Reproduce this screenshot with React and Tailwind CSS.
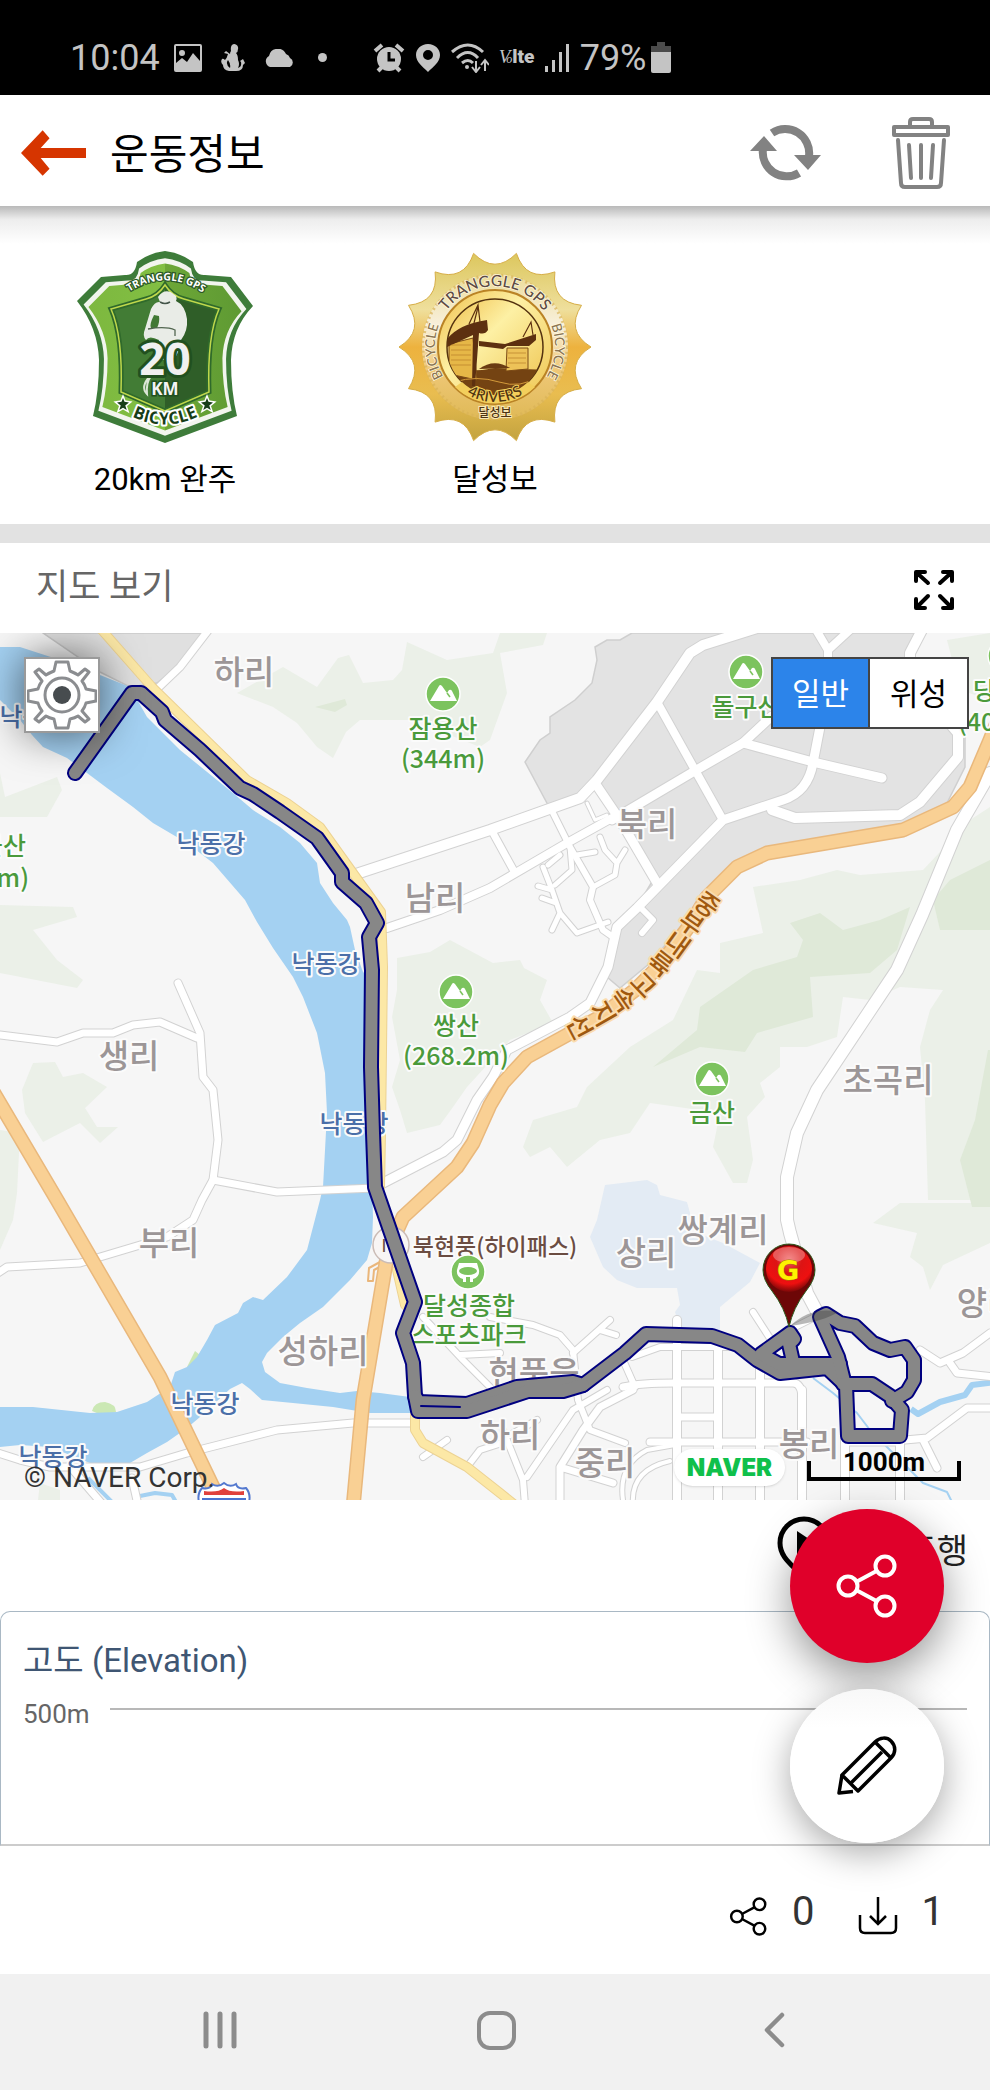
import React from "react";

const KR = "'Noto Sans CJK KR', sans-serif";

/* ---------- status bar ---------- */

function StatusBar() {
  return (
    <div className="flex h-[95px] items-center gap-[14px] bg-black pt-5 pl-[70px] text-[#c4c4c4]">
      <span className="text-[36px] leading-10">10:04</span>
      <div className="flex items-center gap-[19px]">
        <svg width="28" height="28" viewBox="0 0 28 28" fill="currentColor" aria-hidden="true">
          <path fillRule="evenodd" d="M2 0h24a2 2 0 0 1 2 2v24a2 2 0 0 1-2 2H2a2 2 0 0 1-2-2V2a2 2 0 0 1 2-2zm0 2v17l6-5 5 4 6-9 7 8V2zM8 6a3 3 0 1 1 0 6 3 3 0 0 1 0-6z" />
        </svg>
        <svg width="24" height="28" viewBox="0 0 24 28" fill="currentColor" aria-hidden="true">
          <path d="M13 0a4 4 0 0 1 4 5q0 3-2 4 2 2 2 7 2 4 0 8 4-1 3-6l-1-1 3-2 2 4-2 2q0 6-7 6H8q-6-1-6-6-3-3-1-6 1-1 3 1 2-2 3-6L3 9l2-2 4 3q0-2 1-3-1-6 3-7zM7 16q-3 4 2 8 1-4-2-8z" />
        </svg>
        <svg width="31" height="18" viewBox="0 0 31 18" fill="currentColor" aria-hidden="true">
          <path d="M6 18a6 6 0 0 1-1-11A9 9 0 0 1 22 5a6 6 0 0 1 4 4 5 5 0 0 1 0 9z" />
        </svg>
        <span className="ml-1 size-[9px] rounded-full bg-[#c4c4c4]" />
      </div>
      <div className="ml-8 flex items-center gap-[10px]">
        <svg width="32" height="30" viewBox="0 0 32 30" fill="none" stroke="currentColor" aria-hidden="true">
          <circle cx="16" cy="16" r="12" fill="currentColor" stroke="none" />
          <path d="M2 8l7-6M30 8l-7-6M5 28l4-4M27 28l-4-4" strokeWidth="4" />
          <path d="M16 9v8h6" stroke="#000" strokeWidth="3" />
        </svg>
        <svg width="26" height="28" viewBox="0 0 26 28" fill="currentColor" aria-hidden="true">
          <path fillRule="evenodd" d="M13 0c7 0 12 5 12 11 0 7-7 12-12 17C8 23 1 18 1 11 1 5 6 0 13 0zm0 6a5 5 0 1 0 0 10 5 5 0 0 0 0-10z" />
        </svg>
        <svg width="38" height="30" viewBox="0 0 38 30" fill="none" stroke="currentColor" strokeWidth="3" aria-hidden="true">
          <path d="M1 9Q17-5 32 9M6 15Q17 4 27 15M11 20q6-5 11 0" />
          <circle cx="16" cy="24" r="2" fill="currentColor" stroke="none" />
          <path d="M25 18v10M21 24l4 5 4-5M34 28V18M30 22l4-5 4 5" strokeWidth="2" />
        </svg>
        <span className="flex w-[36px] items-baseline text-[19px] leading-5 font-black">
          <i className="font-[Liberation_Serif] text-[19px] font-normal">V</i>
          <i className="-ml-1 font-[Liberation_Serif] text-[12px] font-normal">o</i>
          lte
        </span>
        <svg width="25" height="28" viewBox="0 0 25 28" fill="currentColor" aria-hidden="true">
          <path d="M0 22h3v6H0zM7 16h3v12H7zM14 8h3v20h-3zM21 0h3v28h-3z" />
        </svg>
        <div className="flex items-center gap-1">
          <span className="text-[36px] leading-10">79%</span>
          <svg width="20" height="31" viewBox="0 0 20 31" aria-hidden="true">
            <path d="M6 0h8v4h6v7H0V4h6z" fill="#4b4b4b" />
            <path d="M0 10h20v19a2 2 0 0 1-2 2H2a2 2 0 0 1-2-2z" fill="#c4c4c4" />
          </svg>
        </div>
      </div>
    </div>
  );
}

/* ---------- header ---------- */

function Header() {
  return (
    <header>
      <div className="flex h-[111px] items-center bg-white pt-1 pr-10 pl-[21px]">
        <button type="button" aria-label="뒤로">
          <svg width="65" height="46" viewBox="0 0 66 46" fill="#d63500" aria-hidden="true">
            <path d="M0 23L22 0l7 8-9 10h46v10H20l9 11-7 7z" />
          </svg>
        </button>
        <h1 className="ml-6 flex-1 pt-1 text-[42px] leading-[60px] text-black">운동정보</h1>
        <button type="button" aria-label="새로고침">
          <svg width="72" height="56" viewBox="0 0 72 56" fill="none" stroke="#828282" strokeWidth="8" aria-hidden="true">
            <path d="M22 8A24 24 0 0 1 59 31" />
            <path d="M49 48A24 24 0 0 1 13 24" />
            <path d="M44 30h27L58 45zM0 26h27L14 11z" fill="#828282" stroke="none" />
          </svg>
        </button>
        <button type="button" aria-label="삭제" className="ml-[70px]">
          <svg width="58" height="72" viewBox="0 0 58 72" fill="none" stroke="#828282" strokeWidth="4" strokeLinecap="round" strokeLinejoin="round" aria-hidden="true">
            <path d="M18 9V5q0-3 3-3h16q3 0 3 3v4" />
            <path d="M2 10h54v8H2zM6 23l3 43q0 4 4 4h32q4 0 4-4l3-43M17 28l2 33M29 28v33M41 28l-2 33" />
          </svg>
        </button>
      </div>
      <div className="h-[38px] bg-linear-to-b from-[#b9b9b9] via-[#ededed] via-35% to-white" />
    </header>
  );
}

/* ---------- badges ---------- */

const SHIELD =
  "M165 251Q181 253 193 262Q195 276 205 275L231 277L253 306Q232 328 231 360Q231 392 237 416L165 443L93 416Q99 392 99 360Q98 328 77 301L101 277L125 275Q135 276 137 262Q149 253 165 251Z";
const INNER = "M165 285Q172 296 184 299L219 309Q207 336 209 392L165 411L121 392Q123 336 111 309L146 299Q158 296 165 285Z";
const STAR = "M0-8L2-3L8-2L3 2L5 8L0 5L-5 8L-3 2L-8-2L-2-3Z";

function ShieldBadge() {
  return (
    <svg width="180" height="192" viewBox="75 251 180 192" role="img" aria-label="20km 자전거 완주 배지">
      <defs>
        <linearGradient id="leaf" x1="0" x2="1">
          <stop offset="0" stopColor="#7db83f" />
          <stop offset=".5" stopColor="#82bf43" />
          <stop offset=".5" stopColor="#6da737" />
          <stop offset="1" stopColor="#5e9a33" />
        </linearGradient>
        <linearGradient id="core" x1="0" x2="1">
          <stop offset=".5" stopColor="#427c35" />
          <stop offset=".5" stopColor="#2f5e28" />
        </linearGradient>
        <path id="shieldTop" d="M126 294Q166 266 206 295" />
        <path id="shieldBottom" d="M127 414Q165 435 203 414" />
        <clipPath id="shieldClip"><path d={INNER} /></clipPath>
      </defs>
      <path d={SHIELD} fill="#3e7c3a" />
      <path d={SHIELD} fill="#f2f5ee" transform="translate(165 347) scale(.925) translate(-165 -347)" />
      <path d={SHIELD} fill="url(#leaf)" transform="translate(165 347) scale(.87) translate(-165 -347)" />
      <path d={INNER} fill="url(#core)" stroke="#2f6a2b" strokeWidth="5" />
      <path d={INNER} fill="none" stroke="#c0d84c" strokeWidth="1.5" />
      <g clipPath="url(#shieldClip)">
        <path d="M158 297Q164 288 173 293Q178 296 176 301Q185 305 187 319Q188 331 181 340Q180 350 174 360H157Q158 347 159 340Q149 335 146 340Q142 336 145 329L151 309Q155 301 160 302Z" fill="#e9ece7" />
        <path d="M154 315Q149 325 151 328H157Q160 322 159 316Z" fill="#417834" />
        <path d="M160 302q5 3 10 0" stroke="#44554a" fill="none" strokeWidth="1.5" />
        <path d="M148 329Q166 326 175 330L175 336" stroke="#526650" fill="none" strokeWidth="1.3" />
        <path d="M150 376Q140 387 147 394Q146 382 151 376" fill="none" stroke="#dbe5d6" strokeWidth="2" />
      </g>
      <text x="165" y="375" textAnchor="middle" fontFamily="Open Sans, sans-serif" fontWeight="700" fontSize="45" fill="#f0f0f0" stroke="#21501f" strokeWidth="6" paintOrder="stroke" strokeLinejoin="round">20</text>
      <text x="165" y="395" textAnchor="middle" fontFamily="Open Sans, sans-serif" fontWeight="700" fontSize="17" fill="#f4f4f4" stroke="#21501f" strokeWidth="3" paintOrder="stroke">KM</text>
      <text fontFamily="Open Sans, sans-serif" fontWeight="700" fontSize="10.5" fill="#fff" stroke="#2c5827" strokeWidth="2.5" paintOrder="stroke">
        <textPath href="#shieldTop" startOffset="50%" textAnchor="middle">TRANGGLE GPS</textPath>
      </text>
      <text fontFamily="Open Sans, sans-serif" fontWeight="700" fontSize="17" fill="#173d18" stroke="#fff" strokeWidth="4" paintOrder="stroke" strokeLinejoin="round">
        <textPath href="#shieldBottom" startOffset="50%" textAnchor="middle">BICYCLE</textPath>
      </text>
      {[[123, 404], [207, 404]].map(([x, y]) => (
        <path key={x} d={STAR} transform={`translate(${x} ${y}) scale(.75)`} fill="#173d18" stroke="#fff" strokeWidth="4" paintOrder="stroke" />
      ))}
    </svg>
  );
}

function sunPath(cx, cy, outer, inner, count) {
  const at = (r, a) => `${(cx + r * Math.cos(a)).toFixed(1)} ${(cy + r * Math.sin(a)).toFixed(1)}`;
  const step = (Math.PI * 2) / count;
  let d = `M${at(outer, 0)}`;
  for (let i = 0; i < count; i += 1) {
    d += `Q${at(inner, (i + 0.5) * step)} ${at(outer, (i + 1) * step)}`;
  }
  return `${d}Z`;
}

function GoldBadge() {
  return (
    <svg width="192" height="192" viewBox="400 253 192 192" role="img" aria-label="4대강 달성보 배지">
      <defs>
        <linearGradient id="gold" x1="0" y1="0" x2="0" y2="1">
          <stop offset="0" stopColor="#dcc75e" />
          <stop offset=".3" stopColor="#efdf9c" />
          <stop offset=".5" stopColor="#edb23e" />
          <stop offset=".75" stopColor="#e9bd50" />
          <stop offset="1" stopColor="#c3a33f" />
        </linearGradient>
        <linearGradient id="band" x1="0" y1="0" x2="0" y2="1">
          <stop offset="0" stopColor="#ecdc99" />
          <stop offset=".35" stopColor="#f8f0dc" />
          <stop offset=".65" stopColor="#efc878" />
          <stop offset="1" stopColor="#dfb956" />
        </linearGradient>
        <linearGradient id="coin" x1="0" y1="0" x2="1" y2="1">
          <stop offset="0" stopColor="#f0c04c" />
          <stop offset=".4" stopColor="#fdf0a4" />
          <stop offset="1" stopColor="#eec44f" />
        </linearGradient>
        <path id="goldRing" d="M454 391A60 60 0 1 1 538 391" />
        <path id="goldBottom" d="M441 349A55 55 0 0 0 551 349" />
        <clipPath id="scene"><circle cx="496" cy="349" r="48" /></clipPath>
      </defs>
      <path d={sunPath(496, 349, 96, 72, 14)} fill="url(#gold)" stroke="#d6ad46" strokeWidth="1" strokeLinejoin="round" />
      <circle cx="496" cy="349" r="73" fill="url(#band)" />
      <circle cx="496" cy="349" r="72" fill="none" stroke="#d9b257" strokeWidth="3" strokeDasharray="2 3" opacity=".7" />
      <circle cx="496" cy="349" r="57" fill="url(#coin)" stroke="#ba8325" strokeWidth="2" />
      <circle cx="496" cy="349" r="48" fill="url(#coin)" stroke="#54320f" strokeWidth="1.5" />
      <g clipPath="url(#scene)">
        <path d="M448 370Q470 375 496 370L548 372V400H448Z" fill="#744312" />
        <path d="M450 346L474 340L478 382L450 376Z" fill="#e6b747" stroke="#7b4a16" strokeWidth="1" />
        <path d="M508 350H529V371L507 373Z" fill="#edc258" stroke="#7b4a16" strokeWidth="1" />
        <path d="M480 371Q495 360 511 370Z" fill="#6a3b12" />
        <path d="M448 341Q460 326 488 322L489 332Q486 337 480 335L476 388H473L474 337L448 349Z" fill="#5d3010" />
        <path d="M480 343L506 346L537 336V342L530 348H508L504 351L480 348Z" fill="#5d3010" />
        <path d="M470 326L479 307L481 324M475 325L479 309M524 339L532 324L534 337" fill="none" stroke="#5d3010" strokeWidth="1.2" />
        <path d="M452 347h20M452 352h20M452 357h20M452 362h20M452 367h20M509 355h18M509 360h18M509 365h18" stroke="#b77f2a" strokeWidth=".7" />
        <path d="M455 384Q478 377 500 384T540 378" fill="none" stroke="#d39a3b" strokeWidth="1" />
      </g>
      <path d="M456 389A57 57 0 0 0 536 389L529 384A48 48 0 0 1 463 384Z" fill="#f3cf5c" />
      <g fontFamily="Lato, sans-serif" fontSize="15.500" fontWeight="500" stroke="#fff7dd" strokeWidth="1.5" paintOrder="stroke" fill="#5d4b43">
        <text><textPath href="#goldRing" startOffset="50%" textAnchor="middle">TRANGGLE GPS</textPath></text>
        <text fontSize="13.5" fill="#8a7452"><textPath href="#goldRing" startOffset="15%" textAnchor="middle">BICYCLE</textPath></text>
        <text fontSize="13.5" fill="#8a7452"><textPath href="#goldRing" startOffset="85%" textAnchor="middle">BICYCLE</textPath></text>
      </g>
      <text fontFamily="Lato, sans-serif" fontSize="15" fontWeight="500" fill="#4f3412" stroke="#f3cf5c" strokeWidth="2" paintOrder="stroke">
        <textPath href="#goldBottom" startOffset="50%" textAnchor="middle">4RIVERS</textPath>
      </text>
      <text x="496" y="419" textAnchor="middle" fontFamily={KR} fontSize="12" fontWeight="500" fill="#4f3412" stroke="#f8e6b4" strokeWidth="2" paintOrder="stroke">달성보</text>
    </svg>
  );
}

function Badges() {
  return (
    <section className="grid grid-cols-3 pt-[7px] pb-6 text-center text-[31px] leading-10 text-black">
      <figure className="flex flex-col items-center gap-[17px]">
        <ShieldBadge />
        <figcaption>20km 완주</figcaption>
      </figure>
      <figure className="flex flex-col items-center gap-[17px]">
        <GoldBadge />
        <figcaption>달성보</figcaption>
      </figure>
    </section>
  );
}

/* ---------- map ---------- */

const GREENS = [
  "M237 693L283 667L317 687L338 658L349 655L363 683L393 680L402 670L407 642L447 660L493 653L500 633H547L543 645L500 653L507 693L490 740L480 747L450 735L417 720H360L346 732L333 758L317 747L297 723L273 707Z",
  "M0 773L5 797L57 777L62 790L47 817L0 817Z",
  "M0 905L73 907L77 917L33 930L57 960L83 980L77 988L0 973Z",
  "M33 1063L55 1062L63 1077L83 1073L107 1087L85 1108L97 1127L118 1127L100 1143L80 1123L43 1142L25 1113L22 1090Z",
  "M0 1130L20 1133L17 1193L13 1220L0 1250Z",
  "M397 958L430 952L450 940L493 963L520 960L524 968L547 980L540 1000L553 1023L510 1040L467 1087L453 1107L440 1125L407 1133L400 1110L392 1087L400 1060L392 1017L397 990Z",
  "M753 887L800 880L837 870L860 875L923 870L970 820L990 807V1200L928 1200L925 1100L920 1047L930 1010L943 990L900 987L870 1000L843 997L837 1037L807 1047L780 1047V1067L760 1083L765 1097L747 1117L753 1160L747 1183H733L713 1147L720 1113L650 1103L630 1133L600 1140L567 1167L550 1147L530 1157L523 1147L533 1120L577 1107L587 1087L630 1047L673 1020L697 970L720 973V943L763 933Z",
  "M873 1223L900 1203H990V1243L943 1265L930 1290L923 1267L910 1257L917 1233Z",
  "M947 640L990 633V700L960 690Z",
  "M40 1483L60 1490V1500H38Z",
];
const DARK_GREENS = [
  "M790 923L820 913L843 930L880 920L910 907L897 950L870 973L810 977L813 1017L757 1033L745 1052L700 1047L653 1067L697 1030L700 1007L753 970L797 957L803 940Z",
  "M933 900L950 880L990 860V930L940 930Z",
  "M988 1050L975 1120L960 1160L972 1207H990V1050Z",
  "M315 707L345 699L347 705L335 712Z",
];

const RIVER =
  "M0 647L20 647L60 660L100 675L130 687L147 717L163 733L180 750L233 793L253 810L280 827L300 843L317 863L320 883L333 903L347 920L350 927L355 950L363 972L372 980V1187L373 1217L372 1243L367 1260L350 1280L323 1307L300 1323L283 1337L267 1353L262 1362L265 1372L280 1383L307 1388L340 1393L357 1391L380 1393L410 1397V1413L370 1413L333 1407L293 1403L262 1400L250 1389L242 1383L230 1389L200 1417L187 1428L167 1442L147 1453L130 1463L100 1467L50 1447L20 1445L0 1447V1407L33 1407L90 1413L117 1412L147 1402L170 1387L175 1372L187 1367L197 1357L207 1340L215 1325L238 1313L243 1303L253 1297L263 1300L287 1277L307 1250L313 1227L320 1200L323 1187L325 1150L327 1113L325 1073L317 1033L303 997L293 977L273 948L257 922L245 900L213 863L187 843L153 823L133 807L107 788L83 770L67 758L43 747L32 735L20 720L0 700Z";

const INDUSTRY =
  "M632 633L620 640L607 640L595 647L597 660L592 683L575 700L550 717V733L540 740L525 762L548 805L580 797L600 785L653 880L637 907L617 927L607 977L620 988L650 963L703 900L727 873L767 853L890 833L947 803L965 767V733L940 700L912 660L923 633Z";

const ROADS = [
  ["M757 628L703 645L690 653L657 702L597 780L580 798L490 830L353 875", 10],
  ["M657 702L695 770L723 820", 8],
  ["M612 820L693 772L743 743L772 716", 9],
  ["M743 743L813 762L882 778", 9],
  ["M820 727L813 763Q808 792 783 800L723 820L637 908L617 927L608 967L590 1003L570 1017L507 1050L493 1077L477 1100L457 1140L443 1152L383 1183", 9],
  ["M595 783L620 820L657 883", 9],
  ["M772 810L795 818L900 815L920 802L958 757V733L947 720", 10],
  ["M923 628L910 653V680", 10],
  ["M815 628L828 650L852 628M828 650V665", 8],
  ["M387 928L440 910L490 888L567 843L612 818", 8],
  ["M493 833L515 873", 7],
  ["M553 813L570 847L593 887L590 900L603 930L613 937", 6],
  ["M587 803L595 820L607 815", 3],
  ["M600 837L605 850L617 863L625 850M617 863L615 875L593 887", 5],
  ["M543 867L552 890L560 913L577 933L608 922M552 890L538 886M556 903L542 898M570 847L572 870L555 885M560 855L548 865M577 855L595 852M560 913L552 930", 5],
  ["M640 907L653 920L642 933", 6],
  ["M990 773L957 830L922 915L897 970L817 1090L797 1133L787 1177V1220L790 1233L807 1293L823 1323", 12],
  ["M210 628L180 667L158 688", 7],
  ["M0 1035L57 1042L83 1033L113 1033L133 1025L160 1022L197 1038", 7],
  ["M178 983L200 1033L203 1077L213 1090L218 1140L213 1180L202 1200L193 1220L167 1237L80 1263L7 1267L-5 1275", 7],
  ["M213 1180L277 1192L375 1188", 7],
  ["M-5 1452L20 1460L50 1467H140L187 1453L277 1430L353 1423H413", 7],
  ["M73 1470L103 1505M132 1478L138 1505", 7],
  ["M467 1467L480 1450L505 1442M447 1440L423 1457", 6],
  ["M423 1317L463 1360L500 1397M460 1355L500 1353", 6],
  ["M490 1317L533 1325L560 1335L573 1350L578 1400L590 1430L625 1443", 6],
  ["M610 1320L573 1353M616 1335L600 1330", 6],
  ["M632 1357L660 1347H740M623 1360L635 1387", 6],
  ["M677 1320V1505M718 1345V1505M760 1365V1505M802 1390V1505M845 1430V1505M900 1430V1505", 8],
  ["M623 1387Q640 1383 675 1383H793Q802 1383 802 1400M677 1417H718M650 1442H807M845 1442H900", 7],
  ["M560 1505L560 1467L583 1430L600 1407L633 1390M560 1467L613 1483", 7],
  ["M503 1430L523 1480L525 1505M527 1477L573 1410L607 1390", 6],
  ["M623 1500Q618 1465 647 1450L675 1445M633 1505Q630 1470 670 1461", 4],
  ["M920 1350L940 1363L963 1353L990 1333M950 1363L957 1373L995 1377M905 1440L927 1438L967 1408L995 1408M923 1440L937 1468", 7],
  ["M753 1312L773 1343M795 1327L815 1317M537 1420L510 1435", 6],
];

const HIGHWAYS = [
  "M-8 1090L57 1200L160 1377L213 1487L224 1508",
  "M998 720L990 740L970 787L953 807L903 830L767 853L737 867L707 897L690 925L660 965L635 990L600 1017L567 1035L527 1057L503 1083L490 1105L473 1143L457 1167L403 1217L395 1235L387 1257L363 1400L353 1508",
];
const YELLOWS = [
  "M100 628L152 687L247 780L287 803L320 827L353 873L381 912L383 967L381 1133L380 1187",
  "M397 1270L405 1305",
  "M415 1415V1430L423 1443L467 1467L500 1493L515 1505",
];

const ROUTE = [
  "M75 773L132 693L141 693L162 712L165 720L200 750L240 788L253 794L280 812L317 838L342 873V882L366 903L377 923L369 937L372 970L371 1067L373 1133L375 1187L415 1302L403 1333L413 1363L415 1396L419 1402L467 1404L517 1387L573 1382L583 1385L625 1353L646 1334L712 1336L738 1345L757 1360L780 1373L827 1368L845 1385",
  "M415 1396L418 1411H467L528 1391L563 1391L583 1385",
  "M790 1333L761 1354L779 1364L840 1364M790 1333L794 1339L789 1344L794 1366",
  "M845 1385L838 1357L820 1317L826 1314L840 1323L855 1326L873 1343L890 1350L905 1347L914 1360V1380L907 1392L892 1401",
  "M843 1384H872L890 1396L902 1410L900 1436H848L846 1385",
];

const HIGHWAY_NAME = [
  ["중", 707, 905, 35],
  ["부", 691, 924, 35],
  ["내", 677, 945, 36],
  ["륙", 660, 964, 38],
  ["고", 643, 985, 46],
  ["속", 623, 1000, 55],
  ["지", 602, 1014, 60],
  ["선", 579, 1027, 62],
];

const VILLAGES = [
  ["하리", 244, 672], ["북리", 647, 824], ["남리", 435, 898], ["생리", 129, 1056], ["부리", 169, 1243],
  ["성하리", 323, 1351], ["초곡리", 888, 1080], ["상리", 646, 1253], ["쌍계리", 723, 1230], ["양리", 987, 1303],
  ["현풍읍", 534, 1373], ["하리", 510, 1435], ["중리", 605, 1463], ["봉리", 809, 1444],
];
const RIVER_NAMES = [[211, 844], [326, 964], [354, 1124], [205, 1404], [53, 1457], [34, 717]];
const PEAKS = [
  ["잠용산", 443, 729], ["(344m)", 443, 759], ["쌍산", 456, 1026], ["(268.2m)", 456, 1056], ["금산", 712, 1113],
  ["돌구산", 746, 707], ["당산", 996, 691], ["(400m)", 1000, 722], ["물산", 3, 846], ["(229m)", -13, 878],
  ["달성종합", 469, 1306], ["스포츠파크", 469, 1335],
];
const PEAK_ICONS = [[443, 694], [456, 992], [712, 1079], [746, 672], [1005, 656]];

function Label({ children, x, y, size, color, weight = 500 }) {
  return (
    <text x={x} y={y + Math.round(size * 0.37)} textAnchor="middle" fontFamily={KR} fontSize={size} fontWeight={weight} fill={color} stroke="#fbfbfb" strokeWidth="4" strokeLinejoin="round" paintOrder="stroke">
      {children}
    </text>
  );
}

function MapCanvas() {
  return (
    <svg viewBox="0 633 990 867" className="block h-auto w-full" role="img" aria-label="낙동강 자전거 주행 경로 지도">
      <defs>
        <radialGradient id="ball" cx=".5" cy=".3" r=".7">
          <stop offset="0" stopColor="#f05a5a" />
          <stop offset=".4" stopColor="#dc1414" />
          <stop offset=".75" stopColor="#ee1010" />
          <stop offset="1" stopColor="#7a0808" />
        </radialGradient>
      </defs>
      <rect y="633" width="990" height="867" fill="#f6f6f6" />
      {GREENS.map((d) => <path key={d} d={d} fill="#ebf0e8" />)}
      {DARK_GREENS.map((d) => <path key={d} d={d} fill="#dfe9d8" />)}
      <path d={INDUSTRY} fill="#e3e3e3" stroke="#cfcfcf" strokeWidth="1.5" />
      <path d="M43 633H205L177 668L157 683L130 687L100 672Z" fill="#e0e0e0" stroke="#cacaca" strokeWidth="1.5" />
      <path d="M597 1220L605 1185L647 1180L657 1185L660 1195L687 1202L690 1213V1230L723 1243L760 1263L750 1282L720 1307V1330L680 1328L675 1312L680 1305L677 1288L637 1288L617 1280L603 1267L590 1237Z" fill="#e3ebf4" />
      <path d="M92 1411Q94 1402 105 1402Q116 1404 116 1412L104 1416ZM187 1367L195 1351L200 1355L193 1369Z" fill="#cbe8b4" />
      <path d={RIVER} fill="#a4d1f2" />
      <g fill="none" stroke="#a4d1f2" strokeLinejoin="round">
        <path d="M911 1409L918 1414L940 1402L965 1395L972 1385L995 1382" strokeWidth="6" />
        <path d="M813 1378L833 1393L857 1413L870 1430L890 1450L923 1483L947 1492L952 1502" strokeWidth="2" />
        <path d="M140 1496L155 1493L172 1495L176 1502M88 1478L112 1502" strokeWidth="4" />
      </g>
      <g fill="none" strokeLinecap="round" strokeLinejoin="round">
        {ROADS.map(([d, w]) => <path key={d} d={d} stroke="#d2d2d2" strokeWidth={w + 2} />)}
        {ROADS.map(([d, w]) => <path key={d} d={d} stroke="#fff" strokeWidth={w} />)}
        {YELLOWS.map((d) => <path key={d} d={d} stroke="#ecd293" strokeWidth="10" />)}
        {YELLOWS.map((d) => <path key={d} d={d} stroke="#fce8a6" strokeWidth="8" />)}
        <path d="M380 1262L369 1268L368 1281H373L374 1270L385 1264" stroke="#eab67a" strokeWidth="2" />
        {HIGHWAYS.map((d) => <path key={d} d={d} stroke="#e9b87c" strokeWidth="15" />)}
        {HIGHWAYS.map((d) => <path key={d} d={d} stroke="#f9d094" strokeWidth="12" />)}
      </g>
      <circle cx="391" cy="1245" r="18" fill="#f8f5f4" stroke="#cbbcb6" strokeWidth="1.5" />
      <text x="384" y="1252" textAnchor="middle" fontFamily="Roboto, sans-serif" fontSize="18" fill="#6b4d42">I</text>
      {HIGHWAY_NAME.map(([ch, x, y, a]) => (
        <text key={ch} transform={`translate(${x} ${y}) rotate(${a})`} y="9" textAnchor="middle" fontFamily={KR} fontSize="26" fontWeight="500" fill="#a0590f" stroke="#fbdcae" strokeWidth="4" strokeLinejoin="round" paintOrder="stroke">
          {ch}
        </text>
      ))}
      {VILLAGES.map(([t, x, y]) => <Label key={t + x} x={x} y={y} size={33} color="#9c9697">{t}</Label>)}
      {RIVER_NAMES.map(([x, y]) => <Label key={x + y} x={x} y={y} size={25} color="#4b6fa8">낙동강</Label>)}
      {PEAKS.map(([t, x, y]) => <Label key={t} x={x} y={y} size={25} color="#4a9a3b">{t}</Label>)}
      <Label x={495} y={1246} size={23} color="#6b4d42">북현풍(하이패스)</Label>
      {PEAK_ICONS.map(([x, y]) => (
        <g key={x} transform={`translate(${x} ${y})`}>
          <circle r="17" fill="#7cc35e" stroke="#fff" strokeWidth="1.5" />
          <path d="M-13 7L-4 -8Q-3 -10 -1 -8L4 -1L6 -4Q8 -5 9 -3L14 7Z" fill="#fff" />
          <path d="M4 -1L7 3" stroke="#7cc35e" strokeWidth="1.5" />
        </g>
      ))}
      <g transform="translate(468 1272)">
        <circle r="17" fill="#7cc35e" stroke="#fff" strokeWidth="1.5" />
        <path d="M-9-9H9L11-2Q12 5 5 7V10H-5V7Q-12 5-11-2Z" fill="#fff" />
        <ellipse cy="-1" rx="9" ry="4" fill="#7cc35e" />
        <path d="M0 5v6" stroke="#7cc35e" strokeWidth="4" />
      </g>
      <g transform="translate(224 1484)">
        <path d="M-22 4Q-14 6-12 0Q-6 4 0-1Q6 4 12 0Q14 6 22 4Q27 10 25 18H-25Q-27 10-22 4Z" fill="#fff" stroke="#5479cf" strokeWidth="2" />
        <path d="M-20 7Q-6 9 0 4Q6 9 20 7V11H-20Z" fill="#e0413c" />
        <path d="M-22 14H22V18H-22Z" fill="#4a73d0" />
      </g>
      <g fill="none" strokeLinecap="round" strokeLinejoin="round">
        {ROUTE.map((d) => <path key={d} d={d} stroke="#000080" strokeWidth="16" />)}
        {ROUTE.map((d) => <path key={d} d={d} stroke="#878787" strokeWidth="12" />)}
        <path d="M421 1406L460 1407" stroke="#000080" strokeWidth="2" />
      </g>
      <path d="M790 1326Q812 1306 838 1312Q825 1321 790 1326Z" fill="#333" opacity=".35" />
      <path d="M763 1270a26 26 0 1 1 52 0Q815 1280 806 1291Q793 1308 789 1327Q785 1308 772 1291Q763 1280 763 1270Z" fill="#6d0707" stroke="#2c5a1d" strokeWidth="1" />
      <circle cx="789" cy="1269" r="23" fill="url(#ball)" />
      <ellipse cx="789" cy="1255" rx="16" ry="8" fill="#fff" opacity=".3" />
      <text x="788" y="1280" textAnchor="middle" fontFamily="DejaVu Sans, sans-serif" fontSize="27" fontWeight="700" fill="#fff200" stroke="#a87b00" strokeWidth="1" paintOrder="stroke">G</text>
    </svg>
  );
}

function MapSection() {
  return (
    <section>
      <div className="flex h-[90px] items-center justify-between pr-9 pl-9">
        <h2 className="text-[35px] leading-[50px] text-[#666]">지도 보기</h2>
        <button type="button" aria-label="전체 화면" className="pt-1">
          <svg width="40" height="40" viewBox="0 0 40 40" fill="none" stroke="#000" strokeWidth="4" strokeLinecap="round" strokeLinejoin="round" aria-hidden="true">
            <path d="M2 11V2h9M3 3l11 10M29 2h9v9M37 3L26 13M2 29v9h9M3 37l11-11M38 29v9h-9M37 37L26 26" />
          </svg>
        </button>
      </div>
      <div className="relative overflow-hidden">
        <MapCanvas />
        <button type="button" aria-label="지도 설정" className="absolute top-6 left-6 flex size-[76px] items-center justify-center border-2 border-[#9a9a9a] bg-white shadow-[0_0_44px_rgba(0,0,0,0.6)]">
          <svg width="70" height="70" viewBox="-35 -35 70 70" fill="none" stroke="#8b8d90" strokeWidth="3" strokeLinejoin="round" aria-hidden="true">
            <path d="M-6-33H6L8-24Q13-22 16-20L23-26L27-23L20-14Q23-10 24-6L34-4V6L24 8Q23 12 20 16L27 24L23 27L16 21Q13 23 8 24L6 33H-6L-8 24Q-13 23-16 21L-23 27L-27 24L-20 16Q-23 12-24 8L-34 6V-4L-24-6Q-23-10-20-14L-27-23L-23-26L-16-20Q-13-22-8-24Z" />
            <circle r="17" />
            <circle r="9" fill="#474c4f" stroke="none" />
          </svg>
        </button>
        <div className="absolute top-6 right-[21px] flex h-[72px] border-2 border-[#444] bg-white text-[31px] leading-10">
          <button type="button" aria-pressed="true" className="w-[97px] border-r-2 border-[#444] bg-[#2c84ea] pt-1 text-white">일반</button>
          <button type="button" aria-pressed="false" className="w-[97px] bg-white pt-1 text-black">위성</button>
        </div>
        <p className="absolute bottom-1 left-6 text-[28px] leading-9 text-[#333]">© NAVER Corp.</p>
        <p className="absolute right-[205px] bottom-[14px] flex h-[37px] w-[111px] items-center justify-center rounded-full bg-white font-[Inter] text-[24px] leading-9 font-black text-[#0fc04b] shadow">NAVER</p>
        <p className="absolute right-[29px] bottom-[19px] h-5 w-[154px] border-x-4 border-b-4 border-black" />
        <p className="absolute right-[29px] bottom-[22px] w-[154px] text-center text-[26px] leading-8 font-bold text-black">1000m</p>
      </div>
    </section>
  );
}

/* ---------- elevation and actions ---------- */

function ShareIcon({ size, stroke }) {
  return (
    <svg width={size} height={size} viewBox="0 0 60 64" fill="none" stroke="currentColor" strokeWidth={stroke} aria-hidden="true">
      <circle cx="11" cy="32" r="9.5" />
      <circle cx="48" cy="12" r="9.5" />
      <circle cx="48" cy="52" r="9.5" />
      <path d="M20 27.5L39.5 17M20 36.5L39.5 47" />
    </svg>
  );
}

function Elevation() {
  return (
    <div className="relative">
      <div className="flex h-[111px] justify-end pt-4 pr-[22px]">
        <button type="button" className="flex h-[66px] items-center gap-3 text-[34px] leading-[50px] text-[#222]">
          <svg width="54" height="66" viewBox="0 0 54 66" fill="none" stroke="#000" strokeWidth="5" aria-hidden="true">
            <path d="M27 3a24 24 0 0 1 24 24c0 15-13 22-24 35C16 49 3 42 3 27A24 24 0 0 1 27 3z" />
            <path d="M20 15v24l18-12z" fill="#000" stroke="none" />
          </svg>
          <span className="pt-1">모의주행</span>
        </button>
      </div>
      <section className="h-[235px] rounded-t-[10px] border border-b-2 border-[#a9b8c4] border-b-[#ccc] px-[22px] pt-6">
        <h2 className="text-[33px] leading-[50px] text-[#3f5673]">고도 (Elevation)</h2>
        <div className="mt-[10px] flex items-start gap-5">
          <span className="text-[26px] leading-9 text-[#666]">500m</span>
          <span className="mt-3 h-[2px] flex-1 bg-[#b8b8b8]" />
        </div>
      </section>
      <div className="absolute top-[9px] right-[46px] flex flex-col gap-[26px]">
        <button type="button" aria-label="공유" className="flex size-[154px] items-center justify-center rounded-full bg-[#e0002a] text-white shadow-[0_14px_44px_rgba(0,0,0,0.42)]">
          <ShareIcon size={64} stroke={4} />
        </button>
        <button type="button" aria-label="편집" className="flex size-[154px] items-center justify-center rounded-full bg-linear-to-b from-[#f8f8f8] to-white to-25% text-black shadow-[0_10px_36px_rgba(0,0,0,0.34)]">
          <svg width="60" height="60" viewBox="-1 -1 60 60" fill="none" stroke="currentColor" strokeWidth="3.5" strokeLinejoin="round" aria-hidden="true">
            <path d="M4 38L37 5C42 0 49 0 53 4C58 9 58 16 53 21L20 54Z" />
            <path d="M37 5L53 21M44 15L12 47M4 38L1 56L15 54.5" />
          </svg>
        </button>
      </div>
    </div>
  );
}

function Counts() {
  return (
    <div className="flex h-32 items-center justify-end pt-3 pr-[46px] text-[40px] leading-[50px] text-[#333]">
      <button type="button" aria-label="공유 수" className="flex items-center gap-6">
        <span className="text-black"><ShareIcon size={39} stroke={4} /></span>
        <span className="-mt-2">0</span>
      </button>
      <button type="button" aria-label="다운로드 수" className="ml-[43px] flex items-center gap-6">
        <svg width="40" height="38" viewBox="0 0 40 38" fill="none" stroke="#000" strokeWidth="2.5" aria-hidden="true">
          <path d="M2 18v13q0 5 5 5h26q5 0 5-5V18M20 0v27M12 19l8 8 8-8" />
        </svg>
        <span className="-mt-2">1</span>
      </button>
    </div>
  );
}

function NavBar() {
  return (
    <nav className="grid h-[116px] grid-cols-3 items-center bg-[#f1f1f1] pr-[78px] pb-1 pl-[82px]">
      <button type="button" aria-label="최근 앱" className="flex justify-center">
        <svg width="34" height="38" viewBox="0 0 34 38" stroke="#8c8c8c" strokeWidth="5" strokeLinecap="round" aria-hidden="true">
          <path d="M3 3v32M17 3v32M31 3v32" />
        </svg>
      </button>
      <button type="button" aria-label="홈" className="flex justify-center">
        <span className="size-[39px] rounded-[13px] border-4 border-[#8c8c8c]" />
      </button>
      <button type="button" aria-label="뒤로" className="flex justify-center">
        <svg width="22" height="36" viewBox="0 0 22 36" fill="none" stroke="#8c8c8c" strokeWidth="4.5" strokeLinecap="round" strokeLinejoin="round" aria-hidden="true">
          <path d="M19 3L4 18l15 15" />
        </svg>
      </button>
    </nav>
  );
}

export default function App() {
  return (
    <div className="min-h-screen bg-white font-[Roboto,'Noto_Sans_CJK_KR',sans-serif]">
      <StatusBar />
      <Header />
      <main>
        <Badges />
        <div className="h-[19px] bg-[#e2e2e2]" />
        <MapSection />
        <Elevation />
        <Counts />
      </main>
      <NavBar />
    </div>
  );
}
